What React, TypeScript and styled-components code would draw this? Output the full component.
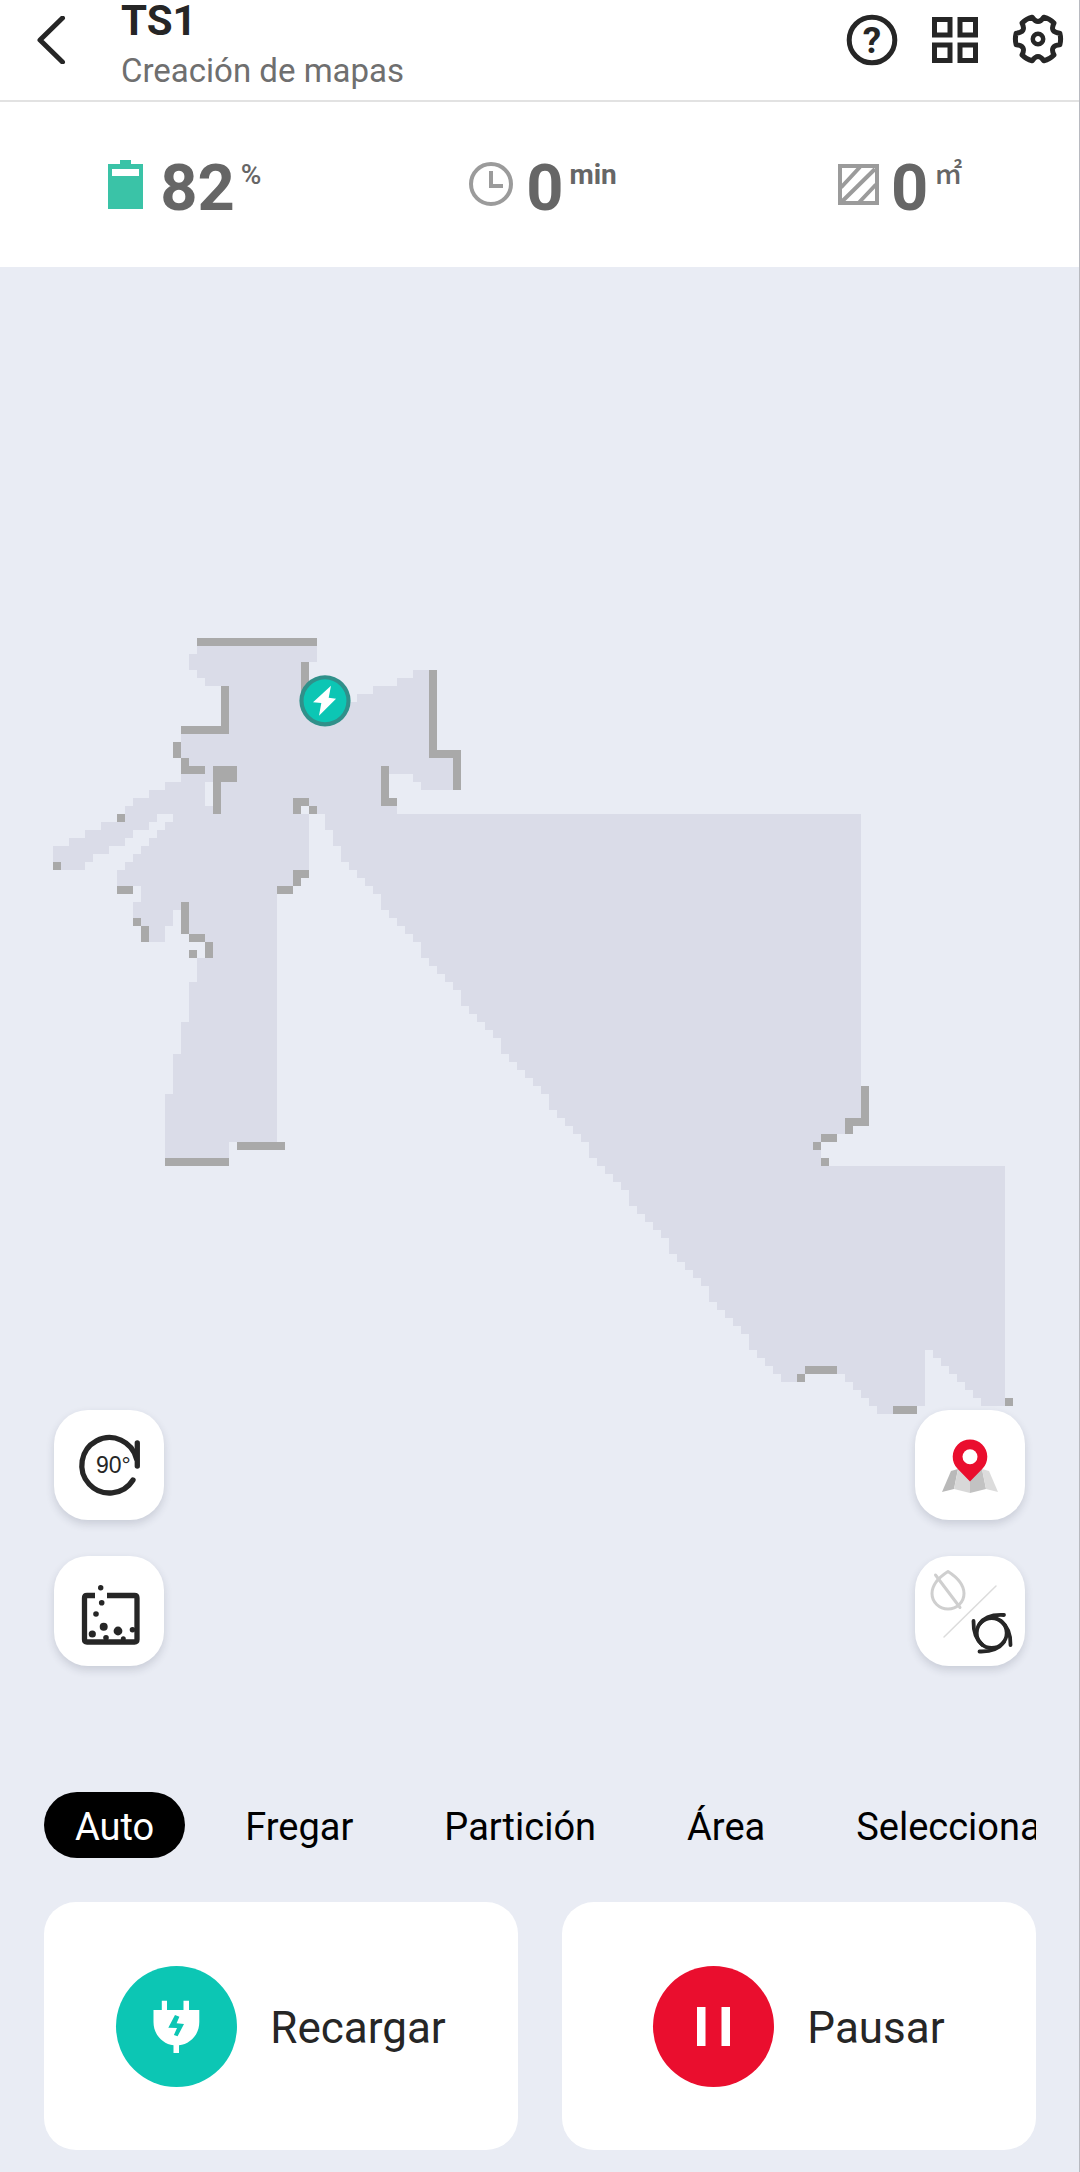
import React, { useState } from "react";
import styled, { createGlobalStyle } from "styled-components";

const color = {
  page: "#e9ecf4",
  floor: "#dadce8",
  wall: "#a9a9a9",
  ink: "#262626",
  value: "#666666",
  muted: "#6f6f6f",
  iconGrey: "#9b9b9b",
  teal: "#0cc6b4",
  battery: "#3ac3a7",
  red: "#ea0e2e",
};

const GlobalStyle = createGlobalStyle`
  *, *::before, *::after { box-sizing: border-box; }
  body {
    margin: 0;
    background: ${color.page};
    font-family: Roboto, "Liberation Sans", sans-serif;
  }
  button {
    margin: 0;
    padding: 0;
    border: 0;
    background: none;
    font: inherit;
    color: inherit;
    cursor: pointer;
  }
  svg { display: block; }
`;

const Page = styled.div`
  display: flex;
  flex-direction: column;
  min-height: 100vh;
  background: ${color.page};
  border-right: 1px solid #b8bac0;
`;

const Header = styled.header`
  display: flex;
  align-items: flex-start;
  height: 102px;
  padding: 0 13px 0 28px;
  background: #fff;
  border-bottom: 2px solid #e2e2e2;
`;

const IconButton = styled.button<{ $size: number }>`
  width: ${(p) => p.$size}px;
  height: 80px;
  display: flex;
  align-items: center;
  justify-content: center;
  color: ${color.ink};
`;

const TitleBlock = styled.div`
  flex: 1;
  display: flex;
  flex-direction: column;
  gap: 8px;
  margin-left: 45px;
`;

const Title = styled.h1`
  margin: 0;
  font-size: 42px;
  line-height: 42px;
  font-weight: 700;
  color: ${color.ink};
`;

const Subtitle = styled.p`
  margin: 0;
  font-size: 33px;
  line-height: 42px;
  color: ${color.muted};
`;

const HeaderActions = styled.div`
  display: flex;
  gap: 27px;
`;

const Stats = styled.section`
  display: grid;
  grid-template-columns: repeat(3, 1fr);
  height: 165px;
  padding-left: 6px;
  background: #fff;
`;

const Stat = styled.div`
  display: flex;
  align-items: center;
  justify-content: center;
  gap: 12px;
`;

const Reading = styled.div`
  display: flex;
  align-items: flex-start;
  gap: 6px;
  color: ${color.value};
`;

const Value = styled.span`
  padding-top: 6px;
  font-size: 65px;
  line-height: 66px;
  font-weight: 700;
`;

const Unit = styled.span<{ $weight: number }>`
  padding-top: 9px;
  font-family: Roboto, "Noto Sans CJK SC", sans-serif;
  font-size: 28px;
  line-height: 34px;
  font-weight: ${(p) => p.$weight};
`;

const MapArea = styled.main`
  flex: 1;
  display: grid;

  > * {
    grid-area: 1 / 1;
  }
`;

const MapCanvas = styled.div`
  padding: 371px 66px 0 53px;

  svg {
    width: 100%;
    height: auto;
  }
`;

const MapControls = styled.div`
  align-self: end;
  display: flex;
  justify-content: space-between;
  padding: 0 54px 82px;
`;

const ControlColumn = styled.div`
  display: flex;
  flex-direction: column;
  gap: 36px;
`;

const ControlButton = styled.button`
  width: 110px;
  height: 110px;
  border-radius: 34px;
  background: #fff;
  box-shadow: 0 4px 8px rgba(40, 44, 70, 0.16);
`;

const ModeTabs = styled.nav`
  display: flex;
  gap: 29px;
  margin: 44px 43px 44px 44px;
  overflow: hidden;
`;

const ModeTab = styled.button<{ $active: boolean }>`
  flex: none;
  height: 66px;
  padding: 4px 31px 0;
  border-radius: 33px;
  font-size: 38px;
  line-height: 62px;
  white-space: nowrap;
  background: ${(p) => (p.$active ? "#000" : "transparent")};
  color: ${(p) => (p.$active ? "#fff" : "#000")};
`;

const Actions = styled.section`
  display: grid;
  grid-template-columns: 1fr 1fr;
  gap: 44px;
  padding: 0 43px 22px 44px;
`;

const ActionCard = styled.button`
  display: flex;
  align-items: center;
  justify-content: center;
  gap: 33px;
  height: 248px;
  border-radius: 32px;
  background: #fff;
  color: ${color.ink};
`;

const ActionBadge = styled.span<{ $tone: string }>`
  width: 121px;
  height: 121px;
  border-radius: 50%;
  background: ${(p) => p.$tone};
`;

const ActionLabel = styled.span`
  padding-top: 4px;
  font-size: 44px;
  line-height: 52px;
`;

/* ---------- Map data, in grid cells ---------- */

type Point = [number, number];
type Rect = [number, number, number, number];

const EAST_SIDE: Point[] = [
  [18, 1], [33, 1], [33, 3], [32, 3], [32, 8], [38, 8], [38, 7], [40, 7],
  [40, 6], [43, 6], [43, 5], [45, 5], [45, 4], [47, 4], [47, 15], [50, 15],
  [50, 19], [46, 19], [46, 18], [45, 18], [45, 17], [42, 17], [42, 21],
  [43, 21], [43, 22], [101, 22], [101, 60], [99, 60], [99, 62], [96, 62],
  [96, 66], [119, 66], [119, 96], [116, 96], [116, 95], [115, 95], [115, 94],
  [114, 94], [114, 93], [113, 93], [113, 92], [112, 92], [112, 91], [111, 91],
  [111, 90], [110, 90], [110, 89], [109, 89], [109, 96], [108, 96], [108, 97],
  [103, 97], [103, 96], [102, 96], [102, 95], [101, 95], [101, 94], [100, 94],
  [100, 93], [99, 93], [99, 92], [94, 92], [94, 93],
];

const WEST_SIDE: Point[] = [
  [33, 22], [33, 21], [31, 21], [31, 22], [32, 22], [32, 29], [30, 29],
  [30, 31], [28, 31], [28, 63], [22, 63], [22, 65], [14, 65], [14, 57],
  [15, 57], [15, 52], [16, 52], [16, 48], [17, 48], [17, 43], [18, 43],
  [18, 40], [20, 40], [20, 38], [19, 38], [19, 37], [17, 37], [17, 34],
  [15, 34], [15, 36], [14, 36], [14, 38], [12, 38], [12, 36], [11, 36],
  [11, 35], [10, 35], [10, 33], [11, 33], [11, 31], [8, 31], [8, 29], [9, 29],
  [9, 28], [10, 28], [10, 27], [11, 27], [11, 26], [12, 26], [12, 25],
  [13, 25], [13, 24], [14, 24], [14, 23], [15, 23], [15, 22], [13, 22],
  [13, 23], [12, 23], [12, 24], [10, 24], [10, 25], [9, 25], [9, 26], [7, 26],
  [7, 27], [5, 27], [5, 28], [4, 28], [4, 29], [0, 29], [0, 26], [2, 26],
  [2, 25], [4, 25], [4, 24], [6, 24], [6, 23], [9, 23], [9, 21], [10, 21],
  [10, 20], [12, 20], [12, 19], [14, 19], [14, 18], [16, 18], [16, 12],
  [22, 12], [22, 6], [19, 6], [19, 5], [18, 5], [18, 4], [17, 4], [17, 2],
  [18, 2],
];

const LONG_STEPS = [34, 35, 36, 41, 46, 51, 56, 62, 67, 72, 77, 82, 87];

/* The long diagonal edge, one column at a time, walked upwards. */
function diagonalEdge(): Point[] {
  const points: Point[] = [];
  let row = 93;
  for (let column = 91; column >= 34; column--) {
    points.push([column, row]);
    row -= LONG_STEPS.includes(column) ? 2 : 1;
    points.push([column, row]);
  }
  return points;
}

const toPath = (points: Point[]) =>
  "M" + points.map(([x, y]) => `${x} ${y}`).join("L") + "Z";

const FLOOR_PATH =
  toPath([...EAST_SIDE, ...diagonalEdge(), ...WEST_SIDE]) +
  toPath([[19, 18], [20, 18], [20, 21], [19, 21]]);

const WALLS: Rect[] = [
  [18, 0, 15, 1], [31, 3, 1, 4], [47, 4, 1, 11], [47, 14, 4, 1],
  [50, 14, 1, 5], [41, 16, 1, 5], [41, 20, 2, 1], [21, 6, 1, 6],
  [16, 11, 6, 1], [15, 13, 1, 2], [16, 15, 1, 2], [16, 16, 3, 1],
  [20, 16, 3, 2], [20, 16, 1, 6], [30, 20, 2, 1], [30, 20, 1, 2],
  [32, 21, 1, 1], [8, 22, 1, 1], [0, 28, 1, 1], [30, 29, 2, 1],
  [30, 29, 1, 2], [28, 31, 2, 1], [8, 31, 2, 1], [10, 35, 1, 1],
  [11, 36, 1, 2], [16, 33, 1, 4], [17, 37, 2, 1], [19, 38, 1, 2],
  [17, 39, 1, 1], [23, 63, 6, 1], [14, 65, 8, 1], [101, 56, 1, 5],
  [99, 60, 3, 1], [99, 60, 1, 2], [96, 62, 2, 1], [95, 63, 1, 1],
  [96, 65, 1, 1], [94, 91, 4, 1], [93, 92, 1, 1], [105, 96, 3, 1],
  [119, 95, 1, 1],
];

function FloorMap() {
  return (
    <svg viewBox="0 0 120 97" role="img" aria-label="Mapa">
      <g shapeRendering="crispEdges">
        <path d={FLOOR_PATH} fill={color.floor} fillRule="evenodd" />
        {WALLS.map(([x, y, w, h], i) => (
          <rect key={i} x={x} y={y} width={w} height={h} fill={color.wall} />
        ))}
      </g>
      <g transform="translate(34 7.85)">
        <circle r="3.2" fill="#30908a" />
        <circle r="2.68" fill={color.teal} />
        <path
          d="M.75-1.88L-1.5.17L-.46.29L-.75 1.88L1.38-.25L.46-.38Z"
          fill="#fff"
        />
      </g>
    </svg>
  );
}

/* ---------- Icons ---------- */

const BackIcon = () => (
  <svg width="48" height="48" viewBox="0 0 48 48" fill="none" stroke="currentColor" strokeWidth="5" strokeLinecap="round" strokeLinejoin="round">
    <path d="M34.5 2L12 24L34.5 46" />
  </svg>
);

const HelpIcon = () => (
  <svg width="56" height="56" viewBox="-28 -28 56 56">
    <circle r="22.8" fill="none" stroke="currentColor" strokeWidth="5" />
    <text y="13" textAnchor="middle" fontFamily="Roboto, sans-serif" fontSize="37" fontWeight="700" fill="currentColor">?</text>
  </svg>
);

const GridIcon = () => (
  <svg width="56" height="56" viewBox="0 0 56 56" fill="none" stroke="currentColor" strokeWidth="5">
    <rect x="7.5" y="7.5" width="15.5" height="15.5" />
    <rect x="33" y="7.5" width="15.5" height="15.5" />
    <rect x="7.5" y="33" width="15.5" height="15.5" />
    <rect x="33" y="33" width="15.5" height="15.5" />
  </svg>
);

function gearPath() {
  const at = (degrees: number, radius: number) => {
    const a = (degrees * Math.PI) / 180;
    return `${(radius * Math.cos(a)).toFixed(2)} ${(radius * Math.sin(a)).toFixed(2)}`;
  };
  let d = `M${at(15 - 30, 22.6)}`;
  for (let notch = 30; notch < 390; notch += 60) {
    d += `A22.6 22.6 0 0 1 ${at(notch - 15, 22.6)}Q${at(notch, 13)} ${at(notch + 15, 22.6)}`;
  }
  return d + "Z";
}

const GearIcon = () => (
  <svg width="56" height="56" viewBox="-28 -27 56 56" fill="none" stroke="currentColor" strokeWidth="5" strokeLinejoin="round">
    <path d={gearPath()} />
    <circle r="5.2" strokeWidth="4.5" />
  </svg>
);

const BatteryIcon = () => (
  <svg width="40" height="50" viewBox="0 0 40 50">
    <path d="M12 0h11v4h12v45H0V4h12z" fill={color.battery} />
    <rect x="4" y="9" width="27" height="7" fill="#fff" />
  </svg>
);

const ClockIcon = () => (
  <svg width="46" height="46" viewBox="0 0 46 46" fill="none" stroke={color.iconGrey} strokeWidth="4">
    <circle cx="23" cy="22" r="20" />
    <path d="M23 9V24H35" />
  </svg>
);

const AreaIcon = () => (
  <svg width="41" height="41" viewBox="0 0 41 41" fill="none" stroke={color.iconGrey} strokeWidth="4">
    <rect x="2" y="2" width="37" height="37" />
    <path d="M3 23.5L22 3M4 37.5L37 5M21 38.5L38 20.5" />
  </svg>
);

const RotateIcon = () => (
  <svg width="110" height="110" viewBox="0 0 110 110" fill="none" stroke={color.ink} strokeWidth="5.3" strokeLinecap="round">
    <path d="M79 70A27.7 27.7 0 1 1 82.5 49" />
    <path d="M83.3 33V56" />
    <text x="42" y="62.5" fontFamily="Liberation Sans, Arial, sans-serif" fontSize="23" fill={color.ink} stroke="none">90°</text>
  </svg>
);

const BIN_DOTS = [
  [46.7, 31.7, 2.7], [47.7, 46.7, 2.8], [42, 58, 2.8], [49.7, 70.7, 4],
  [38.3, 78, 3.6], [64, 75, 4.4], [78.5, 73.7, 2.8], [52, 81.7, 2.8],
  [69.3, 82.7, 2.5],
];

const DustBinIcon = () => (
  <svg width="110" height="110" viewBox="0 0 110 110">
    <path d="M41 39.5H33Q30.5 39.5 30.5 42V83.5Q30.5 86 33 86H80.5Q83 86 83 83.5V42Q83 39.5 80.5 39.5H53" fill="none" stroke={color.ink} strokeWidth="5.3" />
    {BIN_DOTS.map(([x, y, r], i) => (
      <circle key={i} cx={x} cy={y} r={r} fill={color.ink} />
    ))}
  </svg>
);

const MapPinIcon = () => (
  <svg width="110" height="110" viewBox="0 0 110 110">
    <path d="M36 61L43 59L39 79L27 82Z" fill="#b9b9b9" />
    <path d="M43 59L55 62V83L39 79Z" fill="#d8d8d8" />
    <path d="M55 62L67 59L71 79L55 83Z" fill="#c2c2c2" />
    <path d="M67 59L74 61L83 82L71 79Z" fill="#dcdcdc" />
    <path d="M42.6 58.8A17.3 17.3 0 1 1 67.4 58.8L55 71.5Z" fill={color.red} />
    <circle cx="55" cy="46.7" r="7.5" fill="#fff" />
  </svg>
);

const MopBrushIcon = () => (
  <svg width="110" height="110" viewBox="0 0 110 110" fill="none" strokeLinecap="round" strokeLinejoin="round">
    <g stroke="#cfcfcf" strokeWidth="3">
      <path d="M33 15.5C26 20 17 27.5 17 37.5A16 15.5 0 0 0 49 37.5C49 27.5 40 20 33 15.5Z" />
      <path d="M20.5 19L45 51.5" />
    </g>
    <path d="M81 30L29 81" stroke="#dcdcdc" strokeWidth="1.5" />
    <g stroke={color.ink} strokeWidth="3.8">
      <circle cx="76.7" cy="77" r="15" />
      <path d="M64.5 68Q71 58 89 59" />
      <path d="M86 65Q96 73 95.5 89" />
      <path d="M89 86Q82 96 64.5 95.5" />
      <path d="M67.5 89Q58 81 58.5 65" />
    </g>
  </svg>
);

const PlugIcon = () => (
  <svg width="121" height="121" viewBox="0 0 121 121">
    <path
      d="M45.8 34.7H51V44H67.5V34.7H73V44H83.3V56C83.3 69 74 78 63 79.3V87H57.5V79.3C47 78 37.5 69 37.5 56V44H45.8Z"
      fill="#fff"
    />
    <path d="M59 49L63.4 50.7L60.6 57.3L68 58L61.6 70.3L57.9 69L61 62L52.3 61.7Z" fill={color.teal} />
  </svg>
);

const PauseIcon = () => (
  <svg width="121" height="121" viewBox="0 0 121 121" fill="#fff">
    <rect x="44" y="41" width="8.5" height="39" />
    <rect x="68.5" y="41" width="8.5" height="39" />
  </svg>
);

/* ---------- Screen ---------- */

const STATS = [
  { icon: <BatteryIcon />, value: "82", unit: "%", weight: 500 },
  { icon: <ClockIcon />, value: "0", unit: "min", weight: 700 },
  { icon: <AreaIcon />, value: "0", unit: "㎡", weight: 500 },
];

const MODES = ["Auto", "Fregar", "Partición", "Área", "Seleccionar"];

export default function App() {
  const [mode, setMode] = useState("Auto");

  return (
    <>
      <GlobalStyle />
      <Page>
        <Header>
          <IconButton $size={48} aria-label="Volver"><BackIcon /></IconButton>
          <TitleBlock>
            <Title>TS1</Title>
            <Subtitle>Creación de mapas</Subtitle>
          </TitleBlock>
          <HeaderActions>
            <IconButton $size={56} aria-label="Ayuda"><HelpIcon /></IconButton>
            <IconButton $size={56} aria-label="Menú"><GridIcon /></IconButton>
            <IconButton $size={56} aria-label="Ajustes"><GearIcon /></IconButton>
          </HeaderActions>
        </Header>

        <Stats>
          {STATS.map((s) => (
            <Stat key={s.unit}>
              {s.icon}
              <Reading>
                <Value>{s.value}</Value>
                <Unit $weight={s.weight}>{s.unit}</Unit>
              </Reading>
            </Stat>
          ))}
        </Stats>

        <MapArea>
          <MapCanvas><FloorMap /></MapCanvas>
          <MapControls>
            <ControlColumn>
              <ControlButton aria-label="Girar 90°"><RotateIcon /></ControlButton>
              <ControlButton aria-label="Vaciar depósito"><DustBinIcon /></ControlButton>
            </ControlColumn>
            <ControlColumn>
              <ControlButton aria-label="Mapas"><MapPinIcon /></ControlButton>
              <ControlButton aria-label="Agua y cepillo"><MopBrushIcon /></ControlButton>
            </ControlColumn>
          </MapControls>
        </MapArea>

        <ModeTabs>
          {MODES.map((m) => (
            <ModeTab key={m} $active={m === mode} aria-pressed={m === mode} onClick={() => setMode(m)}>
              {m}
            </ModeTab>
          ))}
        </ModeTabs>

        <Actions>
          <ActionCard>
            <ActionBadge $tone={color.teal}><PlugIcon /></ActionBadge>
            <ActionLabel>Recargar</ActionLabel>
          </ActionCard>
          <ActionCard>
            <ActionBadge $tone={color.red}><PauseIcon /></ActionBadge>
            <ActionLabel>Pausar</ActionLabel>
          </ActionCard>
        </Actions>
      </Page>
    </>
  );
}
